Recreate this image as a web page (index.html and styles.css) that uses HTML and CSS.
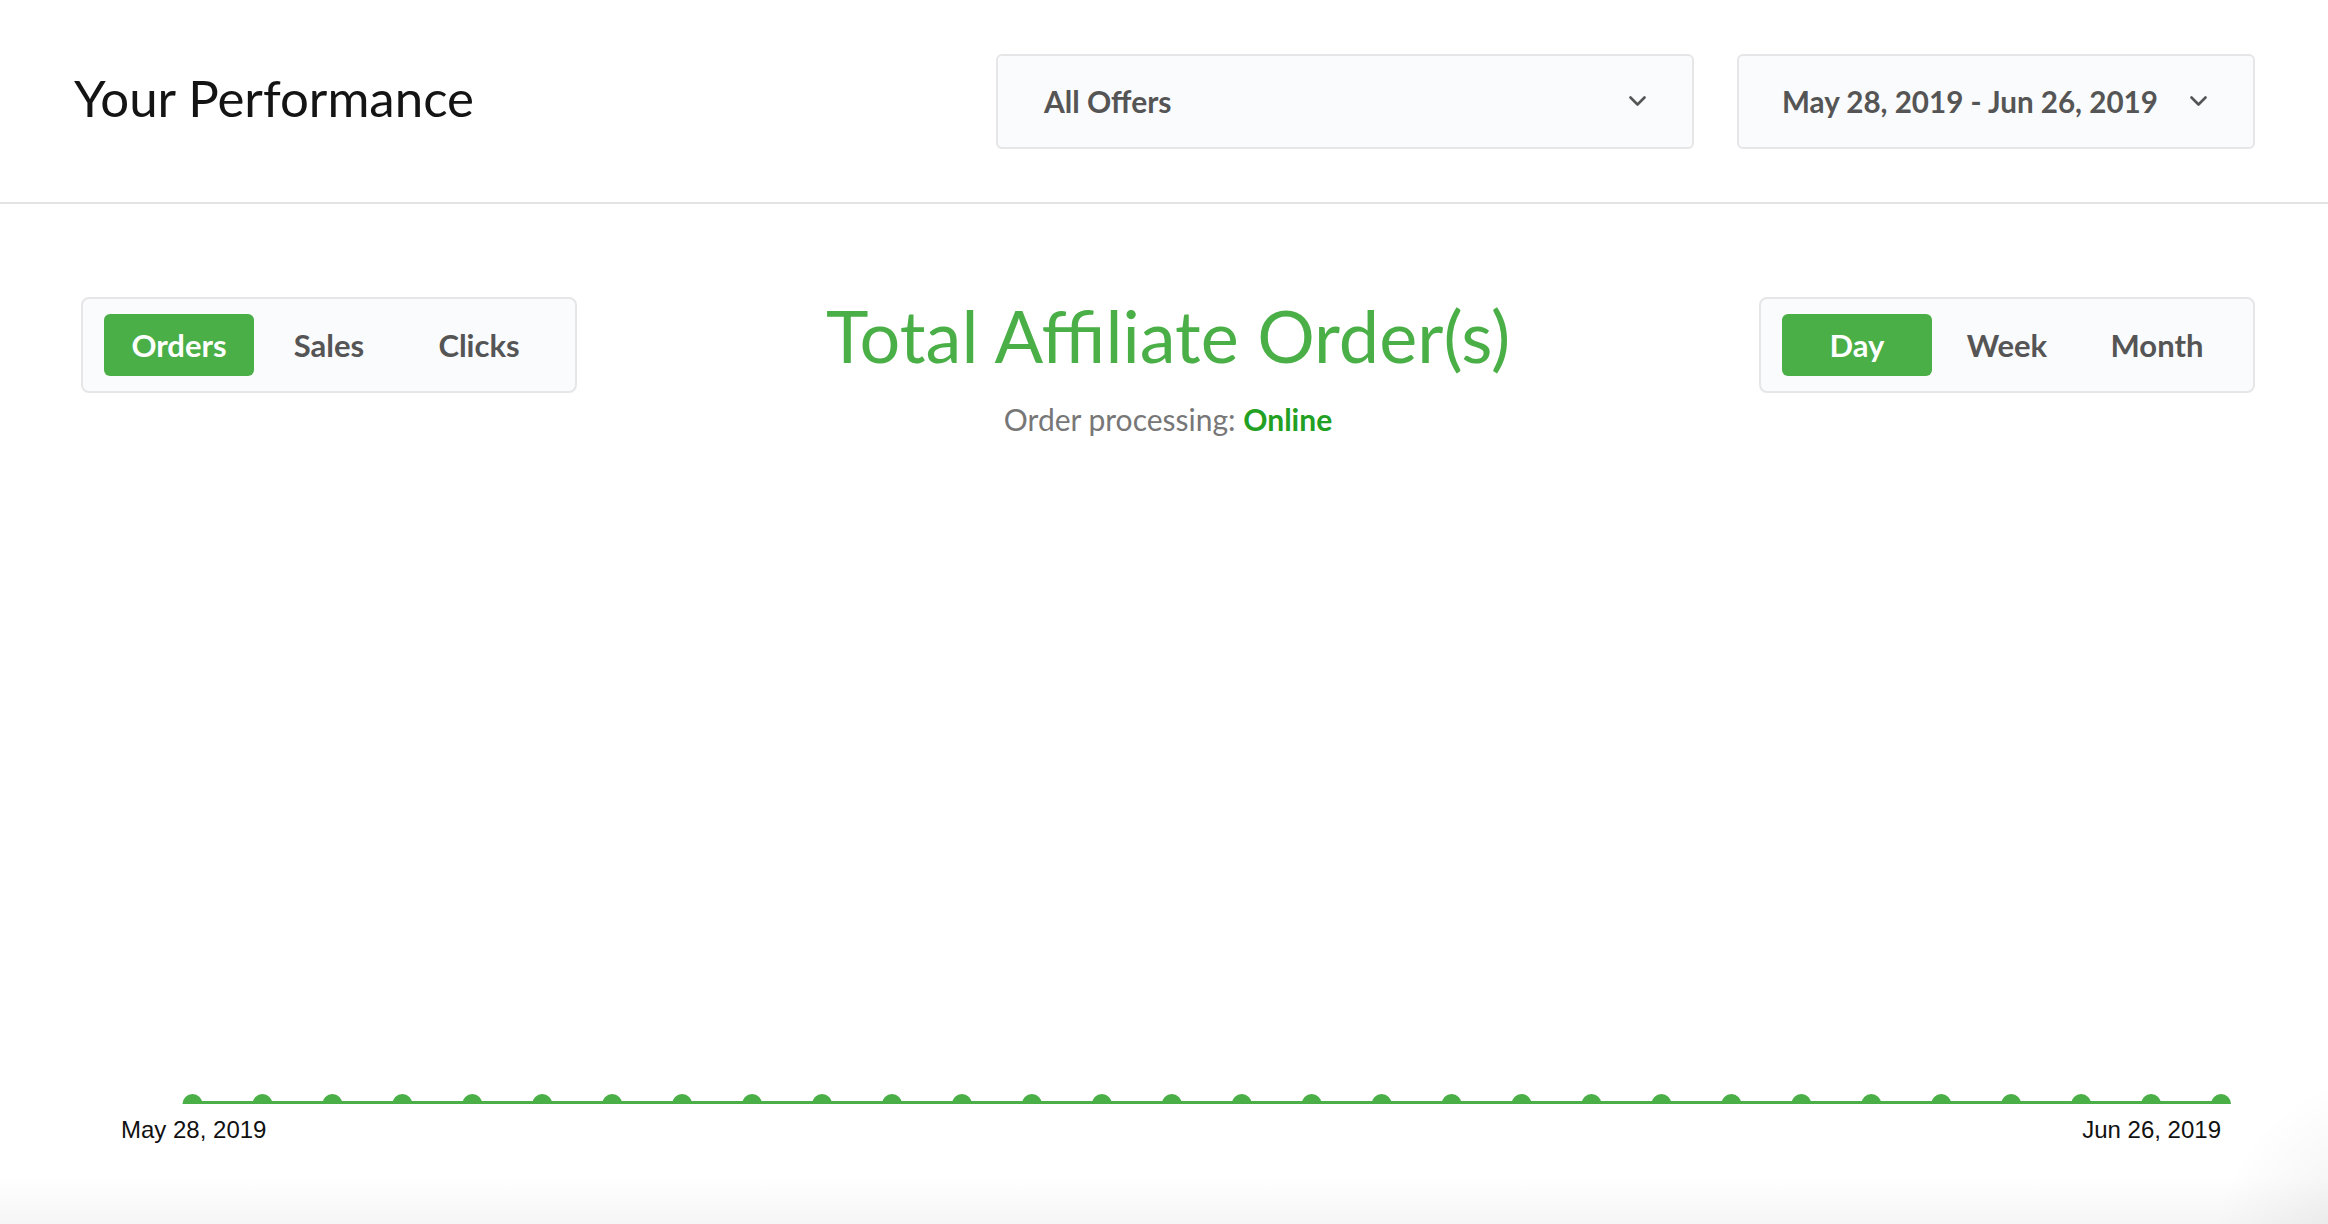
FILE: index.html
```html
<!DOCTYPE html>
<html lang="en">
<head>
  <meta charset="UTF-8" />
  <title>Your Performance</title>
  <link rel="stylesheet" href="styles.css">
</head>
<body>
  <!-- Top bar -->
  <header class="topbar">
    <h1 class="page-title">Your Performance</h1>
    <div class="filters">
      <div class="select select-offers">
        <span>All Offers</span>
        <svg class="chevron" width="17" height="10" viewBox="0 0 17 10"><polyline points="1.5,1.5 8.5,8.5 15.5,1.5" /></svg>
      </div>
      <div class="select select-dates">
        <span>May 28, 2019 - Jun 26, 2019</span>
        <svg class="chevron" width="17" height="10" viewBox="0 0 17 10"><polyline points="1.5,1.5 8.5,8.5 15.5,1.5" /></svg>
      </div>
    </div>
  </header>

  <main class="perf">
    <div class="perf-top">
      <div class="seg">
        <button class="seg-btn active">Orders</button>
        <button class="seg-btn">Sales</button>
        <button class="seg-btn">Clicks</button>
      </div>

      <div class="summary">
        <h2 class="summary-title">Total Affiliate Order(s)</h2>
        <p class="summary-status">Order processing: <b>Online</b></p>
      </div>

      <div class="seg">
        <button class="seg-btn active">Day</button>
        <button class="seg-btn">Week</button>
        <button class="seg-btn">Month</button>
      </div>
    </div>

    <!-- Chart -->
    <div class="chart">
      <svg class="chart-plot" width="2174" height="668" viewBox="0 0 2174 668">
        <rect x="111.5" y="665" width="2028.5" height="3" fill="#4aaf47" />
        <g fill="#4aaf47">
          <circle cx="111.5" cy="668" r="10" />
          <circle cx="181.45" cy="668" r="10" />
          <circle cx="251.4" cy="668" r="10" />
          <circle cx="321.35" cy="668" r="10" />
          <circle cx="391.3" cy="668" r="10" />
          <circle cx="461.25" cy="668" r="10" />
          <circle cx="531.2" cy="668" r="10" />
          <circle cx="601.15" cy="668" r="10" />
          <circle cx="671.1" cy="668" r="10" />
          <circle cx="741.05" cy="668" r="10" />
          <circle cx="811" cy="668" r="10" />
          <circle cx="880.95" cy="668" r="10" />
          <circle cx="950.9" cy="668" r="10" />
          <circle cx="1020.85" cy="668" r="10" />
          <circle cx="1090.8" cy="668" r="10" />
          <circle cx="1160.75" cy="668" r="10" />
          <circle cx="1230.7" cy="668" r="10" />
          <circle cx="1300.65" cy="668" r="10" />
          <circle cx="1370.6" cy="668" r="10" />
          <circle cx="1440.55" cy="668" r="10" />
          <circle cx="1510.5" cy="668" r="10" />
          <circle cx="1580.45" cy="668" r="10" />
          <circle cx="1650.4" cy="668" r="10" />
          <circle cx="1720.35" cy="668" r="10" />
          <circle cx="1790.3" cy="668" r="10" />
          <circle cx="1860.25" cy="668" r="10" />
          <circle cx="1930.2" cy="668" r="10" />
          <circle cx="2000.15" cy="668" r="10" />
          <circle cx="2070.1" cy="668" r="10" />
          <circle cx="2140.05" cy="668" r="10" />
        </g>
      </svg>
      <div class="chart-axis">
        <span>May 28, 2019</span>
        <span>Jun 26, 2019</span>
      </div>
    </div>
  </main>
</body>
</html>
```

FILE: styles.css
```css
body {
  margin: 0;
  min-height: 100vh;
  font-family: 'Lato', 'Open Sans', sans-serif;
  color: #111;
  background:
    radial-gradient(circle at 2400px 1260px, rgba(0, 0, 0, 0.08), rgba(0, 0, 0, 0) 190px),
    linear-gradient(to bottom, #fff 1175px, #f6f6f6 1224px);
  overflow: hidden;
}

.topbar {
  height: 202px;
  display: flex;
  align-items: center;
  justify-content: space-between;
  padding: 0 73px 0 74px;
  border-bottom: 2px solid #e3e3e6;
}

.page-title {
  margin: 0 0 8px;
  font-size: 51px;
  font-weight: 400;
  color: #141414;
}

.filters {
  display: flex;
  gap: 43px;
}

.select {
  box-sizing: border-box;
  height: 95px;
  display: flex;
  align-items: center;
  justify-content: space-between;
  padding: 0 46px;
  border: 2px solid #e6e6e8;
  border-radius: 6px;
  background: #fafbfc;
  font-size: 30px;
  font-weight: 700;
  color: #555;
}

.select-offers {
  width: 698px;
}

.select-dates {
  width: 518px;
  padding-left: 43px;
  font-size: 29.6px;
}

.chevron polyline {
  fill: none;
  stroke: #555;
  stroke-width: 2.6;
  stroke-linecap: round;
  stroke-linejoin: round;
}

.perf {
  padding: 93px 73px 0 81px;
}

.perf-top {
  display: flex;
  justify-content: space-between;
  align-items: flex-start;
}

.seg {
  display: flex;
  padding: 15px 21px;
  border: 2px solid #e6e6e8;
  border-radius: 8px;
  background: #fafbfc;
}

.seg-btn {
  width: 150px;
  height: 62px;
  border: none;
  border-radius: 6px;
  background: transparent;
  font-family: inherit;
  font-size: 31px;
  font-weight: 700;
  color: #555;
  cursor: pointer;
}

.seg-btn.active {
  background: #4aaf47;
  color: #fff;
}

.summary {
  margin-top: -5px;
  text-align: center;
}

.summary-title {
  margin: 0;
  font-size: 72px;
  font-weight: 400;
  line-height: 1.2;
  color: #4aaf47;
}

.summary-status {
  margin: 23px 0 0;
  font-size: 30px;
  line-height: 1.2;
  color: #777;
}

.summary-status b {
  color: #22a023;
}

.chart-plot {
  display: block;
  margin-top: -1px;
}

.chart-axis {
  display: flex;
  justify-content: space-between;
  padding: 0 34px 0 40px;
  margin-top: 12px;
  font-family: 'Liberation Sans', Arial, sans-serif;
  font-size: 24px;
  line-height: 28px;
  color: #111;
}
```
